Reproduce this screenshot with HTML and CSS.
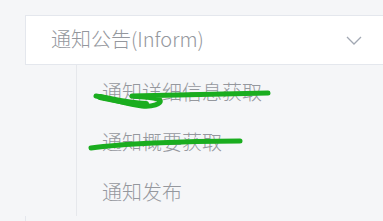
FILE: index.html
```html
<!DOCTYPE html>
<html lang="zh">
<head>
    <meta charset="UTF-8">
    <title>通知公告</title>
    <link rel="stylesheet" href="styles.css">
</head>
<body>
    <div class="menu">
        <div class="menu-title">
            <span>通知公告(Inform)</span>
            <svg class="arrow" width="16" height="10" viewBox="0 0 16 10">
                <polyline points="1,1 8,8 15,1" fill="none" stroke="#a2a8b3" stroke-width="1.3"/>
            </svg>
        </div>
        <div class="submenu">
            <div class="item">通知详细信息获取</div>
            <div class="item">通知概要获取</div>
            <div class="item">通知发布</div>
        </div>
        <div class="tick"></div>
        <!-- hand drawn marks over the first two items -->
        <svg class="scribble" width="383" height="221" viewBox="0 0 383 221">
            <path d="M96 96 C 112 99, 128 104, 142 106 C 152 107, 162 104, 160 100 C 156 97, 140 97, 132 96 L 268 93"
                  fill="none" stroke="#1aad1f" stroke-width="5" stroke-linecap="round" stroke-linejoin="round"/>
            <path d="M100 97 C 115 100, 130 104, 146 104"
                  fill="none" stroke="#1aad1f" stroke-width="6" stroke-linecap="round"/>
            <path d="M91 148 C 120 144, 180 141, 240 141"
                  fill="none" stroke="#1aad1f" stroke-width="5" stroke-linecap="round"/>
        </svg>
    </div>
</body>
</html>
```

FILE: styles.css
```css
body {
    margin: 0;
    background: #f5f6f8;
    font-family: "Noto Sans CJK SC", "Liberation Sans", sans-serif;
    color: #909399;
}
.menu {
    position: relative;
    width: 383px;
    height: 221px;
    padding: 15px 0 0 25px;
    box-sizing: border-box;
    overflow: hidden;
}
.menu-title {
    display: flex;
    align-items: center;
    justify-content: space-between;
    height: 48px;
    padding: 0 21px 0 25px;
    background: #fff;
    border: 1px solid #e4e7ed;
    border-right: none;
    font-size: 20px;
    font-weight: 300;
}
.menu-title span {
    color: #94979d;
    margin-top: -4px;
}
.arrow {
    margin-top: 2px;
}
.submenu {
    margin-left: 51px;
    border-left: 1px solid #e6e8ec;
    height: 151px;
    padding-top: 2px;
    box-sizing: border-box;
}
.item {
    height: 50px;
    line-height: 50px;
    padding-left: 25px;
    font-size: 20px;
    font-weight: 300;
    color: #95989e;
}
.tick {
    width: 1px;
    height: 5px;
    background: #e4e7ed;
}
.scribble {
    position: absolute;
    left: 0;
    top: 0;
}
```
